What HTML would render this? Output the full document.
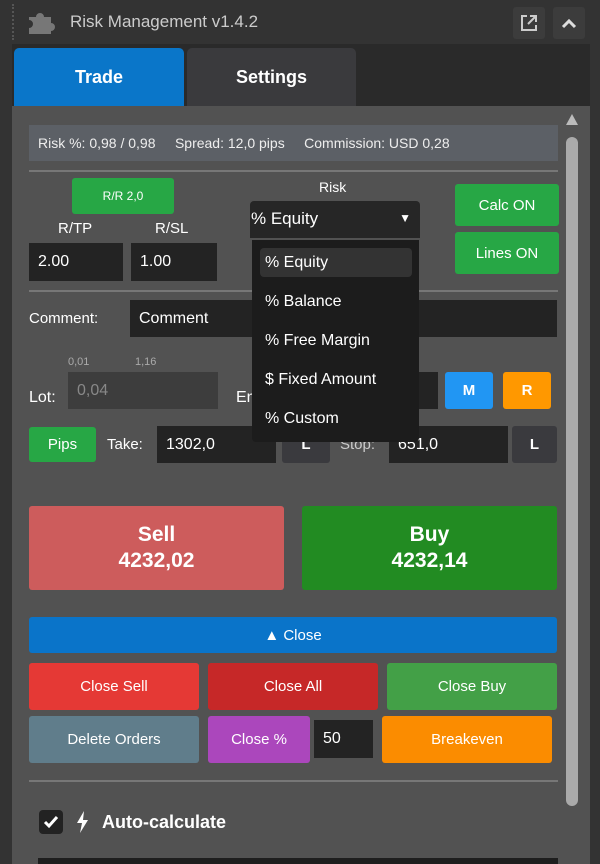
<!DOCTYPE html><html><head><style>
*{box-sizing:border-box;margin:0;padding:0}
body{width:600px;height:864px;background:#2f2f2f;font-family:"Liberation Sans",sans-serif;color:#fff;position:relative;overflow:hidden}
.a{position:absolute}
.c{display:flex;align-items:center;justify-content:center;text-align:center}
.in{background:#232323;color:#fff;font-size:16px;padding-left:9px;display:flex;align-items:center}
.b{border-radius:3px;font-size:15px}
</style></head><body>
<div class="a" style="left:0;top:0;width:600px;height:864px;background:#333"></div>
<div class="a" style="left:12px;top:44px;width:578px;height:820px;background:#525252"></div>
<div class="a" style="left:12px;top:44px;width:578px;height:62px;background:#2a2a2a"></div>
<div class="a" style="left:12px;top:4px;width:3px;height:36px;border-left:2px dotted #555"></div>
<svg class="a" style="left:26px;top:10px" width="32" height="26" viewBox="0 0 32 26"><path d="M3 7h7a4 4 0 1 1 8 0h7v6a4 4 0 1 1 0 8v3H3v-6a4 4 0 1 0 0-8z" fill="#777"/></svg>
<div class="a" style="left:70px;top:12px;font-size:17px;color:#ccc">Risk Management v1.4.2</div>
<div class="a c" style="left:513px;top:7px;width:32px;height:32px;background:#3c3c3c;border-radius:3px"><svg width="20" height="20" viewBox="0 0 20 20" fill="none" stroke="#ccc" stroke-width="2"><path d="M8 3H3v14h14v-5M11 3h6v6M17 3l-8 8"/></svg></div>
<div class="a c" style="left:553px;top:7px;width:32px;height:32px;background:#3c3c3c;border-radius:3px"><svg width="16" height="12" viewBox="0 0 16 12" fill="none" stroke="#ddd" stroke-width="3"><path d="M2 10l6-6 6 6"/></svg></div>
<div class="a c" style="left:14px;top:48px;width:170px;height:58px;background:#0a76c9;border-radius:5px 5px 0 0;font-weight:bold;font-size:18px">Trade</div>
<div class="a c" style="left:187px;top:48px;width:169px;height:58px;background:#3a3a3d;border-radius:5px 5px 0 0;font-weight:bold;font-size:18px">Settings</div>
<div class="a" style="left:566px;top:114px;width:0;height:0;border-left:6px solid transparent;border-right:6px solid transparent;border-bottom:11px solid #bbb"></div>
<div class="a" style="left:566px;top:137px;width:12px;height:669px;background:#aaa;border-radius:6px"></div>
<div class="a" style="left:29px;top:125px;width:529px;height:36px;background:#5c6066;font-size:14px;color:#eee;display:flex;align-items:center;padding-left:9px">Risk %: 0,98 / 0,98&nbsp;&nbsp;&nbsp;&nbsp;&nbsp;Spread: 12,0 pips&nbsp;&nbsp;&nbsp;&nbsp;&nbsp;Commission: USD 0,28</div>
<div class="a" style="left:29px;top:170px;width:529px;height:2px;background:#777"></div>
<div class="a" style="left:29px;top:290px;width:529px;height:2px;background:#777"></div>
<div class="a c b" style="left:72px;top:178px;width:102px;height:36px;background:#27a745;font-size:12px">R/R 2,0</div>
<div class="a" style="left:58px;top:220px;font-size:15px">R/TP</div>
<div class="a" style="left:155px;top:220px;font-size:15px">R/SL</div>
<div class="a in" style="left:29px;top:243px;width:94px;height:38px">2.00</div>
<div class="a in" style="left:131px;top:243px;width:86px;height:38px">1.00</div>
<div class="a" style="left:319px;top:179px;font-size:14px">Risk</div>
<div class="a" style="left:250px;top:201px;width:170px;height:37px;background:#262626;border-radius:4px 4px 0 0;font-size:17px;padding:8px 0 0 1px">% Equity<span style="position:absolute;right:9px;top:10px;font-size:12px">▼</span></div>
<div class="a c b" style="left:455px;top:184px;width:104px;height:42px;background:#27a745">Calc ON</div>
<div class="a c b" style="left:455px;top:232px;width:104px;height:42px;background:#27a745">Lines ON</div>
<div class="a" style="left:29px;top:310px;font-size:15px">Comment:</div>
<div class="a in" style="left:130px;top:300px;width:427px;height:37px">Comment</div>
<div class="a" style="left:68px;top:356px;font-size:11px;color:#aaa">0,01</div>
<div class="a" style="left:135px;top:356px;font-size:11px;color:#aaa">1,16</div>
<div class="a" style="left:29px;top:389px;font-size:16px">Lot:</div>
<div class="a in" style="left:68px;top:372px;width:150px;height:37px;background:#3d3d3d;color:#888">0,04</div>
<div class="a" style="left:236px;top:389px;font-size:16px">En</div>
<div class="a in" style="left:400px;top:372px;width:38px;height:37px"></div>
<div class="a c b" style="left:445px;top:372px;width:48px;height:37px;background:#2196f3;font-weight:bold">M</div>
<div class="a c b" style="left:503px;top:372px;width:48px;height:37px;background:#ff9800;font-weight:bold">R</div>
<div class="a c b" style="left:29px;top:427px;width:67px;height:35px;background:#27a745">Pips</div>
<div class="a" style="left:107px;top:436px;font-size:15px">Take:</div>
<div class="a in" style="left:157px;top:426px;width:119px;height:37px">1302,0</div>
<div class="a c b" style="left:282px;top:426px;width:48px;height:37px;background:#3a3a3e;font-weight:bold">L</div>
<div class="a" style="left:340px;top:436px;font-size:15px;color:#ccc">Stop:</div>
<div class="a in" style="left:389px;top:426px;width:119px;height:37px">651,0</div>
<div class="a c b" style="left:512px;top:426px;width:45px;height:37px;background:#3a3a3e;font-weight:bold">L</div>
<div class="a" style="left:252px;top:240px;width:167px;height:202px;background:#1c1c1c;border-radius:0 0 4px 4px;font-size:16px"></div>
<div class="a" style="left:260px;top:248px;width:152px;height:29px;background:#333;border-radius:4px"></div>
<div class="a" style="left:265px;top:254px;font-size:16px">% Equity</div>
<div class="a" style="left:265px;top:293px;font-size:16px">% Balance</div>
<div class="a" style="left:265px;top:332px;font-size:16px">% Free Margin</div>
<div class="a" style="left:265px;top:371px;font-size:16px">$ Fixed Amount</div>
<div class="a" style="left:265px;top:410px;font-size:16px">% Custom</div>
<div class="a c b" style="left:29px;top:506px;width:255px;height:84px;background:#cd5c5c;font-weight:bold;font-size:21px;line-height:26px">Sell<br>4232,02</div>
<div class="a c b" style="left:302px;top:506px;width:255px;height:84px;background:#228b22;font-weight:bold;font-size:21px;line-height:26px">Buy<br>4232,14</div>
<div class="a c b" style="left:29px;top:617px;width:528px;height:36px;background:#0a74c9">▲ Close</div>
<div class="a c b" style="left:29px;top:663px;width:170px;height:47px;background:#e53935">Close Sell</div>
<div class="a c b" style="left:208px;top:663px;width:170px;height:47px;background:#c62828">Close All</div>
<div class="a c b" style="left:387px;top:663px;width:170px;height:47px;background:#43a047">Close Buy</div>
<div class="a c b" style="left:29px;top:716px;width:170px;height:47px;background:#607d8b">Delete Orders</div>
<div class="a c b" style="left:208px;top:716px;width:102px;height:47px;background:#ab47bc">Close %</div>
<div class="a in" style="left:314px;top:720px;width:59px;height:38px">50</div>
<div class="a c b" style="left:382px;top:716px;width:170px;height:47px;background:#fb8c00">Breakeven</div>
<div class="a" style="left:29px;top:780px;width:529px;height:2px;background:#777"></div>
<div class="a c" style="left:39px;top:810px;width:24px;height:24px;background:#222;border-radius:4px"><svg width="16" height="14" viewBox="0 0 16 14" fill="none" stroke="#fff" stroke-width="3"><path d="M2 7l4 4 8-9"/></svg></div>
<svg class="a" style="left:76px;top:811px" width="14" height="22" viewBox="0 0 14 22"><path d="M8 0L1 12h5l-2 10 8-13H7z" fill="#fff"/></svg>
<div class="a" style="left:102px;top:812px;font-size:18px;font-weight:bold">Auto-calculate</div>
<div class="a" style="left:38px;top:858px;width:520px;height:6px;background:#1e1e1e"></div>
</body></html>
